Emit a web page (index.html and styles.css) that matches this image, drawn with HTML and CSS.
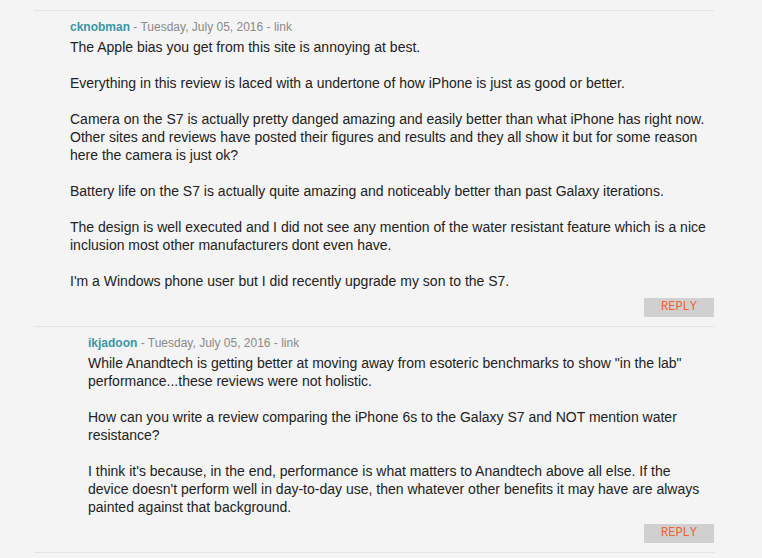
FILE: index.html
```html
<!DOCTYPE html>
<html>
<head>
<meta charset="utf-8">
<link rel="stylesheet" href="styles.css">
</head>
<body>
<div class="comments">
  <div class="comment">
    <div class="meta"><a class="author">cknobman</a> - Tuesday, July 05, 2016 - <a class="link">link</a></div>
    <div class="text">The Apple bias you get from this site is annoying at best.<br><br>Everything in this review is laced with a undertone of how iPhone is just as good or better.<br><br>Camera on the S7 is actually pretty danged amazing and easily better than what iPhone has right now. Other sites and reviews have posted their figures and results and they all show it but for some reason here the camera is just ok?<br><br>Battery life on the S7 is actually quite amazing and noticeably better than past Galaxy iterations.<br><br>The design is well executed and I did not see any mention of the water resistant feature which is a nice inclusion most other manufacturers dont even have.<br><br>I'm a Windows phone user but I did recently upgrade my son to the S7.</div>
    <div class="actions"><span class="reply">REPLY</span></div>
  </div>
  <div class="comment nested">
    <div class="meta"><a class="author">ikjadoon</a> - Tuesday, July 05, 2016 - <a class="link">link</a></div>
    <div class="text">While Anandtech is getting better at moving away from esoteric benchmarks to show "in the lab" performance...these reviews were not holistic.<br><br>How can you write a review comparing the iPhone 6s to the Galaxy S7 and NOT mention water resistance?<br><br>I think it's because, in the end, performance is what matters to Anandtech above all else. If the device doesn't perform well in day-to-day use, then whatever other benefits it may have are always painted against that background.</div>
    <div class="actions"><span class="reply">REPLY</span></div>
  </div>
  <div class="comment tail"></div>
</div>
</body>
</html>
```
FILE: styles.css
```css
html, body {
  margin: 0;
  padding: 0;
  background: #f4f4f4;
}
body {
  font-family: "Liberation Sans", Arial, sans-serif;
  color: #222;
}
.comments {
  width: 680px;
  margin-left: 34px;
  padding-top: 10px;
}
.comment {
  border-top: 1px solid #e4e4e4;
  padding: 8px 0 9px 36px;
}
.comment.nested {
  padding-left: 54px;
}
.comment.tail {
  padding: 0;
  height: 10px;
}
.meta {
  font-size: 12px;
  line-height: 16px;
  color: #8a8a8a;
  margin-bottom: 3px;
}
.author {
  color: #3a97a8;
  font-weight: bold;
}
.link {
  color: #8a8a8a;
}
.text {
  font-size: 14px;
  line-height: 18px;
  color: #222;
}
.actions {
  display: flex;
  justify-content: flex-end;
  margin-top: 8px;
}
.reply {
  width: 70px;
  height: 19px;
  background: #d0d0d0;
  color: #f5602f;
  font-family: "Liberation Mono", "Courier New", monospace;
  font-size: 12px;
  line-height: 19px;
  text-align: center;
}
```
